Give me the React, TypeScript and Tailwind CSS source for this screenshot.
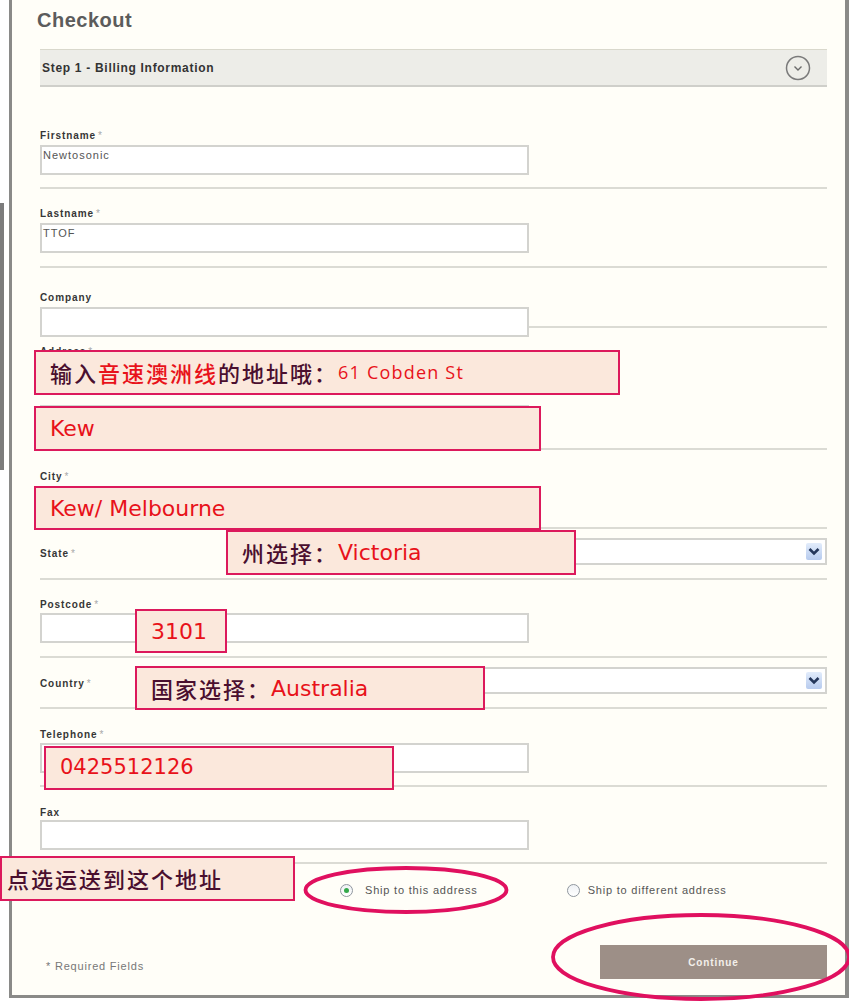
import React from "react";

function Label({ text, req }: { text: string; req?: boolean }) {
  return (
    <div className="text-[10px] leading-[13px] font-bold tracking-[0.9px] text-[#363636]">
      {text}
      {req && <span className="ml-[2px] font-normal text-[#a8a8a8]">*</span>}
    </div>
  );
}

function TextBox({ value, className }: { value?: string; className?: string }) {
  return (
    <div
      className={
        "h-[30px] w-[489px] border-2 border-[#d3d3cf] bg-white px-[1px] pt-[2px] text-[11px] leading-[13px] tracking-[1px] text-[#555] " +
        (className ?? "")
      }
    >
      {value}
    </div>
  );
}

function Line({ className }: { className?: string }) {
  return <div className={"h-[2px] bg-[#dbdbd4] " + (className ?? "")} />;
}

function SelectBox() {
  return (
    <div className="flex h-[27px] flex-1 items-start justify-end border-2 border-[#d3d3cf] bg-white pt-[3px] pr-[3px]">
      <div className="flex h-[17px] w-[16px] items-center justify-center rounded-[2px] bg-gradient-to-b from-[#e2ecfb] to-[#b7cbee]">
        <svg width="12" height="9" viewBox="0 0 12 9">
          <path d="M1.5 2 L6 6.5 L10.5 2" fill="none" stroke="#24365a" strokeWidth="2.6" />
        </svg>
      </div>
    </div>
  );
}

function Callout({ className, children }: { className: string; children: React.ReactNode }) {
  return (
    <div
      className={
        "absolute flex items-center border-2 border-[#dc195c] bg-[#fbe8dc] pl-[14px] whitespace-nowrap " + className
      }
    >
      {children}
    </div>
  );
}

const cjk = "font-['Noto_Sans_CJK_SC',sans-serif] font-medium text-[22px] tracking-[2px] text-[#4a0f2f]";
const latin = "font-['DejaVu_Sans',sans-serif] text-[22px] text-[#e8121a]";

export default function App() {
  return (
    <div className="relative flex h-[1004px] w-[849px] overflow-hidden bg-white font-['Liberation_Sans',Arial,sans-serif]">
      <div className="w-[9px] shrink-0 pt-[203px]">
        <div className="h-[267px] w-[4px] bg-[#7c7c7c]" />
      </div>

      <div className="h-[998px] w-[840px] shrink-0 border-b-[3px] border-l-[3px] border-r-[4px] border-[#8a8a88] bg-[#fffef8] pt-[9px] pl-[28px] pr-[18px]">
        <h1 className="-ml-[3px] text-[20px] leading-[23px] font-bold tracking-[0.5px] text-[#5c5c5c]">Checkout</h1>

        <div className="mt-[17px] flex h-[38px] items-center justify-between border-t border-b-2 border-t-[#d9d8cc] border-b-[#cfcfca] bg-[#edede8] pl-[2px] pr-[16px]">
          <span className="text-[12px] font-bold tracking-[0.7px] text-[#333]">Step 1 - Billing Information</span>
          <svg width="26" height="26" viewBox="0 0 26 26">
            <circle cx="13" cy="13" r="11.5" fill="none" stroke="#7a7a7a" strokeWidth="1.5" />
            <path d="M9.5 11.5 L13 15 L16.5 11.5" fill="none" stroke="#6a6a6a" strokeWidth="1.4" />
          </svg>
        </div>

        <div className="mt-[42px]">
          <Label text="Firstname" req />
        </div>
        <TextBox value="Newtosonic" className="mt-[3px]" />
        <Line className="mt-[12px]" />

        <div className="mt-[18px]">
          <Label text="Lastname" req />
        </div>
        <TextBox value="TTOF" className="mt-[3px]" />
        <Line className="mt-[13px]" />

        <div className="mt-[23px]">
          <Label text="Company" />
        </div>
        <TextBox className="relative z-[1] mt-[3px]" />
        <Line className="-mt-[11px]" />

        <div className="mt-[17px]">
          <Label text="Address" req />
        </div>
        <TextBox className="mt-[3px]" />
        <TextBox className="mt-[14px]" />
        <Line className="mt-[13px]" />

        <div className="mt-[20px]">
          <Label text="City" req />
        </div>
        <TextBox className="mt-[3px]" />
        <Line className="mt-[11px]" />

        <div className="mt-[9px] flex h-[27px]">
          <div className="w-[200px] pt-[9px]">
            <Label text="State" req />
          </div>
          <SelectBox />
        </div>
        <Line className="mt-[13px]" />

        <div className="mt-[18px]">
          <Label text="Postcode" req />
        </div>
        <TextBox className="mt-[2px]" />
        <Line className="mt-[13px]" />

        <div className="mt-[9px] flex h-[27px]">
          <div className="w-[200px] pt-[10px]">
            <Label text="Country" req />
          </div>
          <SelectBox />
        </div>
        <Line className="mt-[13px]" />

        <div className="mt-[19px]">
          <Label text="Telephone" req />
        </div>
        <TextBox className="mt-[2px]" />
        <Line className="mt-[12px]" />

        <div className="mt-[19px]">
          <Label text="Fax" />
        </div>
        <TextBox className="mt-[1px]" />
        <Line className="mt-[12px]" />

        <div className="mt-[19px] flex h-[14px] items-center text-[11px] tracking-[0.8px] text-[#555]">
          <div className="ml-[300px] flex h-[13px] w-[13px] items-center justify-center rounded-full border border-[#8f969e] bg-gradient-to-b from-[#eef1f4] to-white">
            <div className="h-[5px] w-[5px] rounded-full bg-[#34a84a]" />
          </div>
          <span className="ml-[12px]">Ship to this address</span>
          <div className="ml-[89px] h-[13px] w-[13px] rounded-full border border-[#8f969e] bg-gradient-to-b from-[#eef1f4] to-white" />
          <span className="ml-[8px]">Ship to different address</span>
        </div>

        <div className="mt-[48px] flex h-[34px] items-center justify-between">
          <span className="ml-[6px] mt-[8px] text-[11px] tracking-[0.8px] text-[#777]">* Required Fields</span>
          <button
            type="button"
            className="h-[34px] w-[227px] bg-[#9d8f87] text-[10px] font-bold tracking-[0.9px] text-[#f3efeb]"
          >
            Continue
          </button>
        </div>
      </div>

      <Callout className="left-[34px] top-[350px] h-[45px] w-[586px]">
        <span className={cjk}>输入</span>
        <span className="font-['Noto_Sans_CJK_SC',sans-serif] font-medium text-[22px] tracking-[2px] text-[#e8121a]">音速澳洲线</span>
        <span className={cjk}>的地址哦：</span>
        <span className="font-['Open_Sans',sans-serif] text-[18px] tracking-[1.2px] text-[#e8121a]">61 Cobden St</span>
      </Callout>
      <Callout className="left-[34px] top-[406px] h-[45px] w-[507px]">
        <span className={latin}>Kew</span>
      </Callout>
      <Callout className="left-[34px] top-[486px] h-[44px] w-[507px]">
        <span className={latin}>Kew/ Melbourne</span>
      </Callout>
      <Callout className="left-[226px] top-[530px] h-[45px] w-[350px]">
        <span className={cjk}>州选择：</span>
        <span className={latin}>Victoria</span>
      </Callout>
      <Callout className="left-[135px] top-[609px] h-[44px] w-[92px]">
        <span className={latin}>3101</span>
      </Callout>
      <Callout className="left-[135px] top-[666px] h-[44px] w-[350px]">
        <span className={cjk}>国家选择：</span>
        <span className={latin}>Australia</span>
      </Callout>
      <Callout className="left-[44px] top-[746px] h-[44px] w-[350px]">
        <span className="font-['DejaVu_Sans',sans-serif] text-[21px] text-[#e8121a]">0425512126</span>
      </Callout>
      <Callout className="left-0 top-[856px] h-[45px] w-[295px] !pl-[5px]">
        <span className={cjk}>点选运送到这个地址</span>
      </Callout>

      <svg className="pointer-events-none absolute left-0 top-0" width="849" height="1004" viewBox="0 0 849 1004">
        <ellipse cx="406" cy="890" rx="100.5" ry="22" fill="none" stroke="#e0105f" strokeWidth="3.8" />
        <ellipse cx="701" cy="957" rx="148" ry="42" fill="none" stroke="#e0105f" strokeWidth="3.8" />
      </svg>
    </div>
  );
}
